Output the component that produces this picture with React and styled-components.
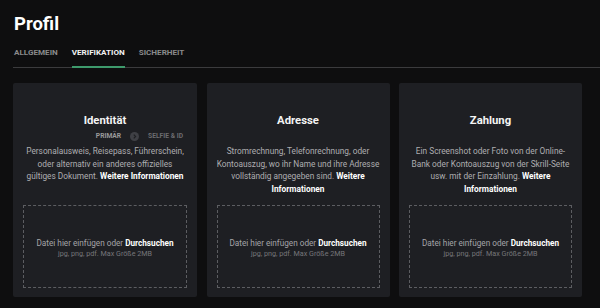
import styled, { createGlobalStyle } from "styled-components";

const GlobalStyle = createGlobalStyle`
  body {
    margin: 0;
    background-color: #0e0e0f;
    font-family: Roboto, "Liberation Sans", Arial, sans-serif;
  }
`;

const Page = styled.div`
  width: 600px;
  height: 308px;
  box-sizing: border-box;
  padding: 12px 19px 0 13px;
  overflow: hidden;
`;

const Title = styled.h1`
  margin: 0 0 0 1px;
  font-size: 18.5px;
  line-height: 24px;
  font-weight: 700;
  color: #ffffff;
`;

const TabBar = styled.div`
  display: flex;
  gap: 14px;
  margin: 11px -19px 0 0;
  padding-left: 1px;
  border-bottom: 1px solid #3b3b3d;
`;

const Tab = styled.div`
  font-size: 8.1px;
  line-height: 10px;
  font-weight: 700;
  padding-bottom: 9px;
  color: ${(props) => (props.active ? "#f2f2f2" : "#8a8a8c")};
  border-bottom: 2px solid ${(props) => (props.active ? "#3e9a6c" : "transparent")};
  margin-bottom: -1px;
`;

const Cards = styled.div`
  display: grid;
  grid-template-columns: 184px 183px 183px;
  gap: 9.5px;
  margin-top: 15px;
`;

const Card = styled.div`
  display: flex;
  flex-direction: column;
  align-items: center;
  background-color: #1e1f23;
  border-radius: 2px;
  padding: 31px 9px 9px;
  height: 214px;
  box-sizing: border-box;
`;

const CardTitle = styled.h2`
  margin: 0;
  font-size: 11.3px;
  line-height: 14px;
  font-weight: 700;
  color: #f4f4f4;
`;

const Steps = styled.div`
  align-self: flex-end;
  display: flex;
  align-items: center;
  gap: 9px;
  height: 10px;
  margin: 3px 5px 4px 0;
  visibility: ${(props) => (props.hidden ? "hidden" : "visible")};
`;

const Step = styled.span`
  font-size: 6.7px;
  font-weight: 700;
  color: ${(props) => (props.current ? "#9a9a9c" : "#6c6c70")};
`;

const Description = styled.p`
  margin: 0;
  font-size: 8.3px;
  line-height: 12.6px;
  text-align: center;
  white-space: nowrap;
  color: #aeaeb1;

  b {
    color: #ffffff;
    font-weight: 700;
  }
`;

const DropZone = styled.div`
  margin-top: auto;
  align-self: stretch;
  margin-left: 1px;
  margin-right: 1px;
  height: 83px;
  box-sizing: border-box;
  border: 1px dashed #5c5d61;
  display: flex;
  flex-direction: column;
  align-items: center;
  justify-content: center;
  padding-top: 3px;
`;

const DropText = styled.div`
  font-size: 8.2px;
  line-height: 11px;
  color: #a4a4a8;

  b {
    color: #ffffff;
    font-weight: 700;
  }
`;

const DropHint = styled.div`
  font-size: 7.2px;
  line-height: 10px;
  color: #76767a;
`;

function StepArrow() {
  return (
    <svg width="9" height="9" viewBox="0 0 10 10">
      <circle cx="5" cy="5" r="5" fill="#3f4045" />
      <path d="M4.2 3 L6.2 5 L4.2 7" stroke="#1e1f23" strokeWidth="1.3" fill="none" />
    </svg>
  );
}

const cards = [
  {
    title: "Identität",
    steps: true,
    text: (
      <>
        Personalausweis, Reisepass, Führerschein,
        <br />
        oder alternativ ein anderes offizielles
        <br />
        gültiges Dokument. <b>Weitere Informationen</b>
      </>
    ),
  },
  {
    title: "Adresse",
    text: (
      <>
        Stromrechnung, Telefonrechnung, oder
        <br />
        Kontoauszug, wo ihr Name und ihre Adresse
        <br />
        vollständig angegeben sind. <b>Weitere</b>
        <br />
        <b>Informationen</b>
      </>
    ),
  },
  {
    title: "Zahlung",
    text: (
      <>
        Ein Screenshot oder Foto von der Online-
        <br />
        Bank oder Kontoauszug von der Skrill-Seite
        <br />
        usw. mit der Einzahlung. <b>Weitere</b>
        <br />
        <b>Informationen</b>
      </>
    ),
  },
];

function App() {
  return (
    <Page>
      <GlobalStyle />
      <Title>Profil</Title>
      <TabBar>
        <Tab>ALLGEMEIN</Tab>
        <Tab active>VERIFIKATION</Tab>
        <Tab>SICHERHEIT</Tab>
      </TabBar>
      <Cards>
        {cards.map((card) => (
          <Card key={card.title}>
            <CardTitle>{card.title}</CardTitle>
            <Steps hidden={!card.steps}>
              <Step current>PRIMÄR</Step>
              <StepArrow />
              <Step>SELFIE &amp; ID</Step>
            </Steps>
            <Description>{card.text}</Description>
            <DropZone>
              <DropText>
                Datei hier einfügen oder <b>Durchsuchen</b>
              </DropText>
              <DropHint>jpg, png, pdf. Max Größe 2MB</DropHint>
            </DropZone>
          </Card>
        ))}
      </Cards>
    </Page>
  );
}

export default App;
